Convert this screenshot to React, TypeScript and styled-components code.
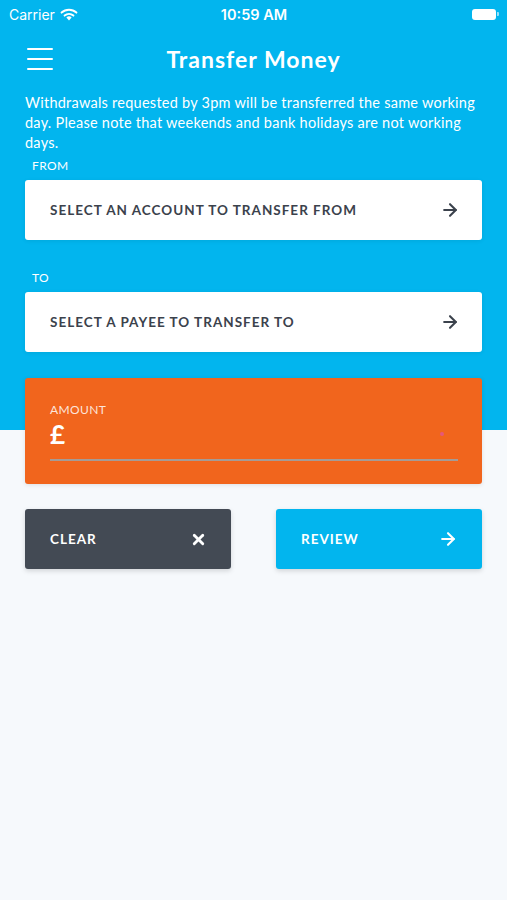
import styled, { createGlobalStyle } from 'styled-components';
import { ArrowRight, X } from 'lucide-react';

const BLUE = '#02b5ee';
const ORANGE = '#f1651d';
const DARK = '#434a54';
const TEXT = '#3b424c';

const GlobalStyle = createGlobalStyle`
    html, body {
        margin: 0;
        padding: 0;
    }
    body {
        font-family: Lato, 'Open Sans', sans-serif;
        background: #f6f9fc;
    }
    * {
        box-sizing: border-box;
    }
`;

const Screen = styled.div`
    width: 507px;
    min-height: 900px;
    background: linear-gradient(to bottom, ${BLUE} 0, ${BLUE} 430px, #f6f9fc 430px);
    display: flex;
    flex-direction: column;
`;

const StatusBar = styled.div`
    height: 28px;
    padding: 0 8px 0 9px;
    display: flex;
    align-items: center;
    justify-content: space-between;
    color: #fff;
    font-family: Inter, Roboto, sans-serif;
    font-size: 14px;
`;

const Carrier = styled.div`
    display: flex;
    align-items: center;
    gap: 5px;
    width: 120px;
`;

const Clock = styled.div`
    font-weight: 600;
    font-size: 14.5px;
`;

const Battery = styled.div`
    width: 120px;
    display: flex;
    justify-content: flex-end;
    align-items: center;
    gap: 1px;
    & > span:first-child {
        width: 24px;
        height: 11px;
        border-radius: 3px;
        background: #fff;
    }
    & > span:last-child {
        width: 2px;
        height: 4px;
        border-radius: 0 1px 1px 0;
        background: rgba(255, 255, 255, 0.6);
    }
`;

const NavBar = styled.div`
    height: 62px;
    padding: 0 27px;
    display: grid;
    grid-template-columns: 40px 1fr 40px;
    align-items: center;
`;

const Burger = styled.div`
    width: 26px;
    display: flex;
    flex-direction: column;
    gap: 8px;
    & > span {
        height: 2px;
        background: #fff;
        border-radius: 1px;
    }
`;

const Title = styled.h1`
    margin: 0;
    text-align: center;
    color: #fff;
    font-size: 23px;
    font-weight: 700;
    letter-spacing: 1px;
`;

const Content = styled.div`
    padding: 3px 25px 0;
    display: flex;
    flex-direction: column;
`;

const Notice = styled.p`
    margin: 0;
    color: #fff;
    font-size: 14.5px;
    line-height: 20px;
    letter-spacing: 0.25px;
`;

const FieldLabel = styled.div<{ $top: number }>`
    margin: ${(p) => p.$top}px 0 6px 7px;
    color: #fff;
    font-size: 12px;
    line-height: 16px;
    letter-spacing: 0.4px;
`;

const SelectCard = styled.div`
    height: 60px;
    background: #fff;
    border-radius: 3px;
    padding: 0 22px 0 25px;
    display: flex;
    align-items: center;
    justify-content: space-between;
    color: ${TEXT};
    font-size: 13.5px;
    font-weight: 700;
    letter-spacing: 1px;
    box-shadow: 0 1px 4px rgba(0, 0, 0, 0.08);
`;

const AmountCard = styled.div`
    margin-top: 26px;
    height: 106px;
    background: ${ORANGE};
    border-radius: 3px;
    padding: 25px 24px 0 25px;
    box-shadow: 0 1px 4px rgba(0, 0, 0, 0.1);
`;

const AmountLabel = styled.div`
    color: rgba(255, 255, 255, 0.85);
    font-size: 12px;
    line-height: 14px;
    letter-spacing: 0.4px;
`;

const AmountInput = styled.div`
    height: 44px;
    padding-bottom: 8px;
    display: flex;
    align-items: center;
    justify-content: space-between;
    border-bottom: 2px solid #a59b96;
    color: #fff;
    font-size: 26px;
    font-weight: 700;
    & > i {
        width: 4px;
        height: 4px;
        border-radius: 50%;
        background: #e5587a;
        margin-right: 14px;
    }
`;

const Actions = styled.div`
    margin-top: 25px;
    display: grid;
    grid-template-columns: 206px 206px;
    justify-content: space-between;
`;

const ActionButton = styled.button<{ $bg: string }>`
    height: 60px;
    border: none;
    border-radius: 3px;
    background: ${(p) => p.$bg};
    color: #fff;
    padding: 0 24px 0 25px;
    display: flex;
    align-items: center;
    justify-content: space-between;
    font-family: inherit;
    font-size: 13.5px;
    font-weight: 700;
    letter-spacing: 1px;
    box-shadow: 0 2px 5px rgba(0, 0, 0, 0.15);
`;

const WifiIcon = () => (
    <svg width="18" height="13" viewBox="0 0 18 13">
        <path d="M9 12.5 L11.6 9.4 A4 4 0 0 0 6.4 9.4 Z" fill="#fff" />
        <path d="M4.6 7.6 A6.6 6.6 0 0 1 13.4 7.6" stroke="#fff" strokeWidth="2" fill="none" strokeLinecap="round" />
        <path d="M1.6 4.6 A10.8 10.8 0 0 1 16.4 4.6" stroke="#fff" strokeWidth="2" fill="none" strokeLinecap="round" />
    </svg>
);

const App = () => {
    return (
        <>
            <GlobalStyle />
            <Screen>
                <StatusBar>
                    <Carrier>
                        Carrier <WifiIcon />
                    </Carrier>
                    <Clock>10:59 AM</Clock>
                    <Battery>
                        <span />
                        <span />
                    </Battery>
                </StatusBar>
                <NavBar>
                    <Burger>
                        <span />
                        <span />
                        <span />
                    </Burger>
                    <Title>Transfer Money</Title>
                    <div />
                </NavBar>
                <Content>
                    <Notice>
                        Withdrawals requested by 3pm will be transferred the same working day. Please note that
                        weekends and bank holidays are not working days.
                    </Notice>
                    <FieldLabel $top={5}>FROM</FieldLabel>
                    <SelectCard>
                        SELECT AN ACCOUNT TO TRANSFER FROM
                        <ArrowRight size={20} strokeWidth={2.5} color={TEXT} />
                    </SelectCard>
                    <FieldLabel $top={30}>TO</FieldLabel>
                    <SelectCard>
                        SELECT A PAYEE TO TRANSFER TO
                        <ArrowRight size={20} strokeWidth={2.5} color={TEXT} />
                    </SelectCard>
                    <AmountCard>
                        <AmountLabel>AMOUNT</AmountLabel>
                        <AmountInput>
                            £<i />
                        </AmountInput>
                    </AmountCard>
                    <Actions>
                        <ActionButton $bg={DARK}>
                            CLEAR
                            <X size={17} strokeWidth={4} color="#fff" />
                        </ActionButton>
                        <ActionButton $bg={BLUE}>
                            REVIEW
                            <ArrowRight size={20} strokeWidth={2.5} color="#fff" />
                        </ActionButton>
                    </Actions>
                </Content>
            </Screen>
        </>
    );
};

export default App;
